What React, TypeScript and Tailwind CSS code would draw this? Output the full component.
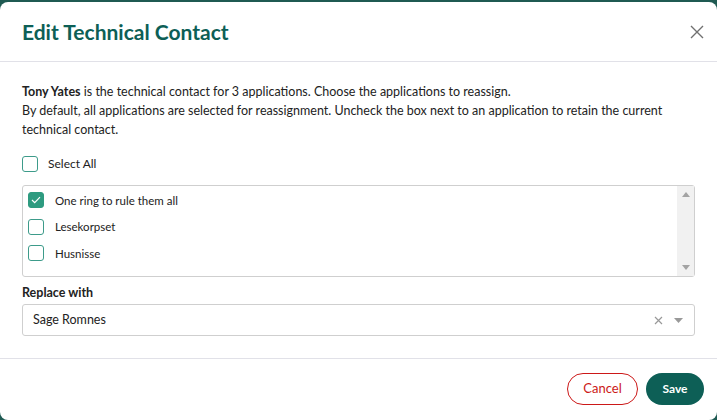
import React, { useState } from "react";

const apps = ["One ring to rule them all", "Lesekorpset", "Husnisse"];

function Box({ checked, onClick }: { checked: boolean; onClick: () => void }) {
  return (
    <button
      type="button"
      onClick={onClick}
      className={`flex h-4 w-4 shrink-0 items-center justify-center rounded-[3px] border ${
        checked ? "border-[#2e9b80] bg-[#2e9b80]" : "border-[#3d9b8a] bg-white"
      }`}
    >
      {checked && (
        <svg width="10" height="8" viewBox="0 0 10 8" fill="none">
          <path d="M1 4l2.7 2.7L9 1.2" stroke="#fff" strokeWidth="1.2" />
        </svg>
      )}
    </button>
  );
}

export default function App() {
  const [selected, setSelected] = useState([true, false, false]);
  const [all, setAll] = useState(false);

  return (
    <div
      className="h-[420px] w-[717px] overflow-hidden bg-[#1f5a52] pt-[2px] text-[#222]"
      style={{ fontFamily: "Lato, 'Liberation Sans', sans-serif" }}
    >
      <div className="flex h-[418px] flex-col rounded-lg bg-white">
        {/* header */}
        <div className="flex h-[60px] items-center justify-between border-b border-[#e1e1e8] pl-[22px] pr-[13px]">
          <h2 className="text-[21px] font-bold text-[#0d5f56]">Edit Technical Contact</h2>
          <svg width="14" height="14" viewBox="0 0 14 14">
            <path d="M1 1l12 12M13 1L1 13" stroke="#707070" strokeWidth="1.4" />
          </svg>
        </div>

        {/* body */}
        <div className="flex flex-col px-[22px] pt-[20px] pb-[22px] text-[12.5px]">
          <p className="leading-[19px]">
            <b className="font-bold">Tony Yates</b> is the technical contact for 3 applications. Choose the
            applications to reassign.
            <br />
            By default, all applications are selected for reassignment. Uncheck the box next to an application
            to retain the current technical contact.
          </p>

          <div className="mt-[15px] flex h-[19px] items-center gap-[10px]">
            <Box checked={all} onClick={() => setAll(!all)} />
            <span className="text-[12px]">Select All</span>
          </div>

          <div className="mt-[12px] flex h-[92px] rounded-[3px] border border-[#cfcfcf]">
            <div className="flex flex-1 flex-col pt-[1px] pl-[5px]">
              {apps.map((a, i) => (
                <div key={a} className="flex h-[26.5px] items-center gap-[11px]">
                  <Box
                    checked={selected[i]}
                    onClick={() => setSelected(selected.map((s, j) => (j === i ? !s : s)))}
                  />
                  <span className="text-[11.5px]">{a}</span>
                </div>
              ))}
            </div>
            <div className="flex w-[17px] flex-col items-center justify-between bg-[#f1f1f1] py-[6px]">
              <svg width="8" height="5" viewBox="0 0 8 5">
                <path d="M0 5L4 0l4 5z" fill="#a3a3a3" />
              </svg>
              <svg width="8" height="5" viewBox="0 0 8 5">
                <path d="M0 0h8L4 5z" fill="#a3a3a3" />
              </svg>
            </div>
          </div>

          <label className="mt-[6px] font-bold leading-[19px]">Replace with</label>
          <div className="mt-[2px] flex h-[32px] items-center rounded-[3px] border border-[#cfcfcf] pl-[10px] pr-[11px]">
            <span className="flex-1">Sage Romnes</span>
            <svg width="9" height="9" viewBox="0 0 9 9">
              <path d="M1 1l7 7M8 1L1 8" stroke="#999" strokeWidth="1.2" />
            </svg>
            <svg width="9" height="5" viewBox="0 0 9 5" className="ml-[11px]">
              <path d="M0 0h9L4.5 5z" fill="#999" />
            </svg>
          </div>
        </div>

        {/* footer */}
        <div className="flex items-center justify-end gap-[8px] border-t border-[#e1e1e8] pt-[14px] pr-[13px]">
          <button className="h-[32px] w-[71px] rounded-full border border-[#cc1818] text-[13px] text-[#cc1818]">
            Cancel
          </button>
          <button className="h-[32px] w-[58px] rounded-full bg-[#0d5f56] text-[12px] font-bold text-white">
            Save
          </button>
        </div>
      </div>
    </div>
  );
}
